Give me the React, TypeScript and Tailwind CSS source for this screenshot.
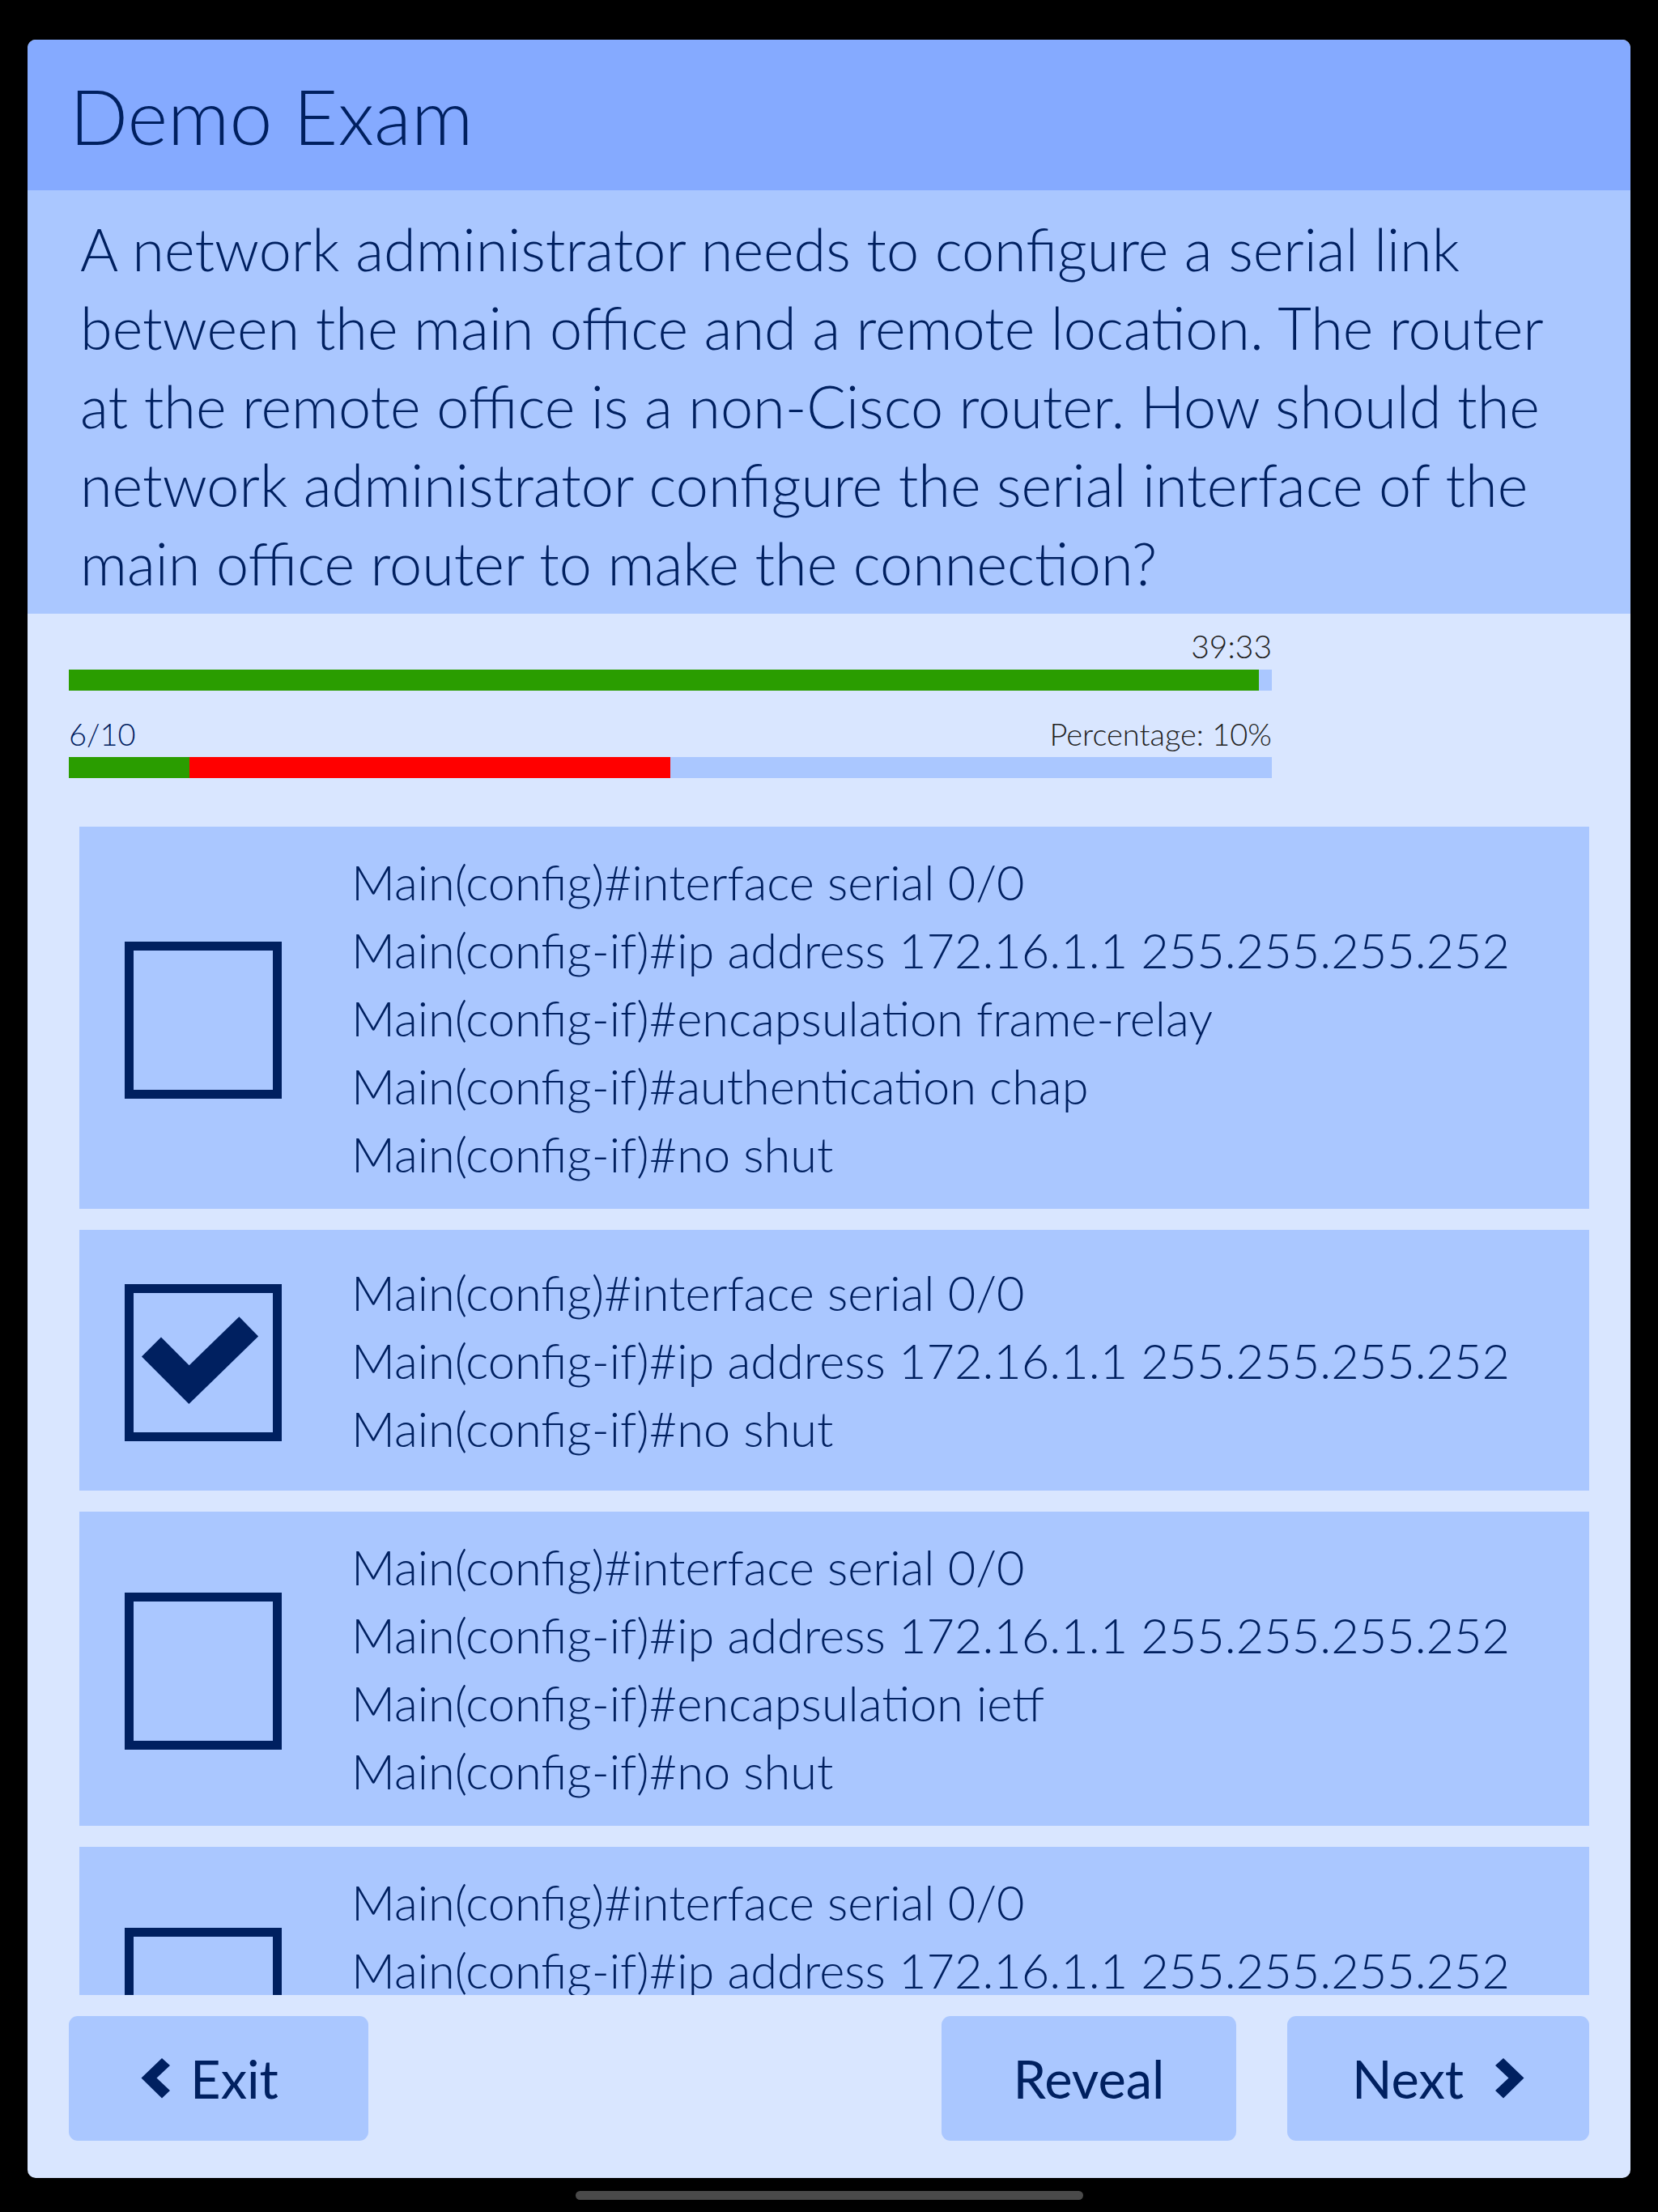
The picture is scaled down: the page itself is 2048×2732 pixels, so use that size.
import { FC } from 'react';

type Option = { lines: string[]; checked?: boolean };

const options: Option[] = [
	{
		lines: [
			'Main(config)#interface serial 0/0',
			'Main(config-if)#ip address 172.16.1.1 255.255.255.252',
			'Main(config-if)#encapsulation frame-relay',
			'Main(config-if)#authentication chap',
			'Main(config-if)#no shut',
		],
	},
	{
		lines: [
			'Main(config)#interface serial 0/0',
			'Main(config-if)#ip address 172.16.1.1 255.255.255.252',
			'Main(config-if)#no shut',
		],
		checked: true,
	},
	{
		lines: [
			'Main(config)#interface serial 0/0',
			'Main(config-if)#ip address 172.16.1.1 255.255.255.252',
			'Main(config-if)#encapsulation ietf',
			'Main(config-if)#no shut',
		],
	},
	{
		lines: [
			'Main(config)#interface serial 0/0',
			'Main(config-if)#ip address 172.16.1.1 255.255.255.252',
			'Main(config-if)#encapsulation ppp',
			'Main(config-if)#no shut',
		],
	},
];

const Chevron: FC<{ dir: 'left' | 'right' }> = ({ dir }) => (
	<svg
		viewBox="0 0 36 50"
		className={dir === 'left' ? 'h-[50px] w-[36px] -scale-x-100' : 'h-[50px] w-[36px]'}
	>
		<polygon points="0,9 10,0 35.5,24.5 10,49.5 0,40 16.5,24.5" fill="#002060" />
	</svg>
);

const Checkbox: FC<{ checked?: boolean }> = ({ checked }) => (
	<div className="mt-[6px] flex h-[194px] w-[194px] shrink-0 items-center justify-center border-[11px] border-[#002060]">
		{checked && (
			<svg viewBox="0 0 100 100" className="h-[194px] w-[194px] shrink-0">
				<polyline
					points="17,40 41,64 79,27"
					fill="none"
					stroke="#002060"
					strokeWidth="17.5"
					strokeLinejoin="miter"
				/>
			</svg>
		)}
	</div>
);

function ProgressBar({ parts }: { parts: { width: string; color: string }[] }) {
	return (
		<div className="flex h-[26px] w-[1486px] bg-[#aac7ff]">
			{parts.map((p, i) => (
				<div key={i} className={`h-full ${p.color}`} style={{ width: p.width }} />
			))}
		</div>
	);
}

export default function App() {
	return (
		<div
			className="flex min-h-screen flex-col items-center bg-black pt-[49px]"
			style={{ fontFamily: 'Lato, "Noto Sans", sans-serif' }}
		>
			<div className="flex h-[2641px] w-[1980px] flex-col overflow-hidden rounded-[10px] bg-[#d9e6ff] text-[#002060]">
				{/* Header */}
				<div className="flex h-[186px] shrink-0 items-center bg-[#85aaff] pl-[52px]">
					<h1 className="text-[95px] font-light leading-none">Demo Exam</h1>
				</div>

				{/* Question */}
				<div className="shrink-0 bg-[#aac7ff] pt-[24px] pr-[60px] pb-[14px] pl-[65px] text-[72px] font-light leading-[97px]">
					A network administrator needs to configure a serial link between the main office and a
					remote location. The router at the remote office is a non-Cisco router. How should the
					network administrator configure the serial interface of the main office router to make
					the connection?
				</div>

				{/* Timer + progress */}
				<div className="flex shrink-0 flex-col pt-[21px] pl-[51px]">
					<div className="w-[1486px] text-right text-[39px] font-light leading-none text-[#222]">
						39:33
					</div>
					<div className="mt-[9px]">
						<ProgressBar parts={[{ width: '98.9%', color: 'bg-[#2a9d00]' }]} />
					</div>
					<div className="mt-[34px] flex w-[1486px] justify-between text-[38px] font-light leading-none">
						<span>6/10</span>
						<span className="text-[#222]">Percentage: 10%</span>
					</div>
					<div className="mt-[10px]">
						<ProgressBar
							parts={[
								{ width: '10%', color: 'bg-[#2a9d00]' },
								{ width: '40%', color: 'bg-[#ff0000]' },
							]}
						/>
					</div>
				</div>

				{/* Options */}
				<div className="flex min-h-0 flex-1 flex-col gap-[26px] overflow-hidden pt-[60px] pr-[51px] pl-[64px]">
					{options.map((opt, i) => (
						<div
							key={i}
							className="flex min-h-[322px] shrink-0 items-center bg-[#aac7ff] py-[26px] pl-[56px]"
						>
							<Checkbox checked={opt.checked} />
							<div className="ml-[86px] text-[59.5px] font-light leading-[84px] whitespace-nowrap">
								{opt.lines.map((line, j) => (
									<div key={j}>{line}</div>
								))}
							</div>
						</div>
					))}
				</div>

				{/* Buttons */}
				<div className="flex shrink-0 items-center justify-between pt-[26px] pr-[51px] pb-[46px] pl-[51px]">
					<button className="flex h-[154px] w-[370px] items-center justify-center gap-[25px] rounded-[11px] bg-[#aac7ff] pr-[22px] text-[65px] leading-none">
						<Chevron dir="left" />
						<span>Exit</span>
					</button>
					<div className="flex gap-[63px]">
						<button className="flex h-[154px] w-[364px] items-center justify-center rounded-[11px] bg-[#aac7ff] text-[65px] leading-none">
							Reveal
						</button>
						<button className="flex h-[154px] w-[373px] items-center justify-center gap-[39px] rounded-[11px] bg-[#aac7ff] text-[65px] leading-none">
							<span>Next</span>
							<Chevron dir="right" />
						</button>
					</div>
				</div>
			</div>

			{/* Home indicator */}
			<div className="mt-[16px] h-[11px] w-[627px] rounded-full bg-[#4a4a4a]" />
		</div>
	);
}
